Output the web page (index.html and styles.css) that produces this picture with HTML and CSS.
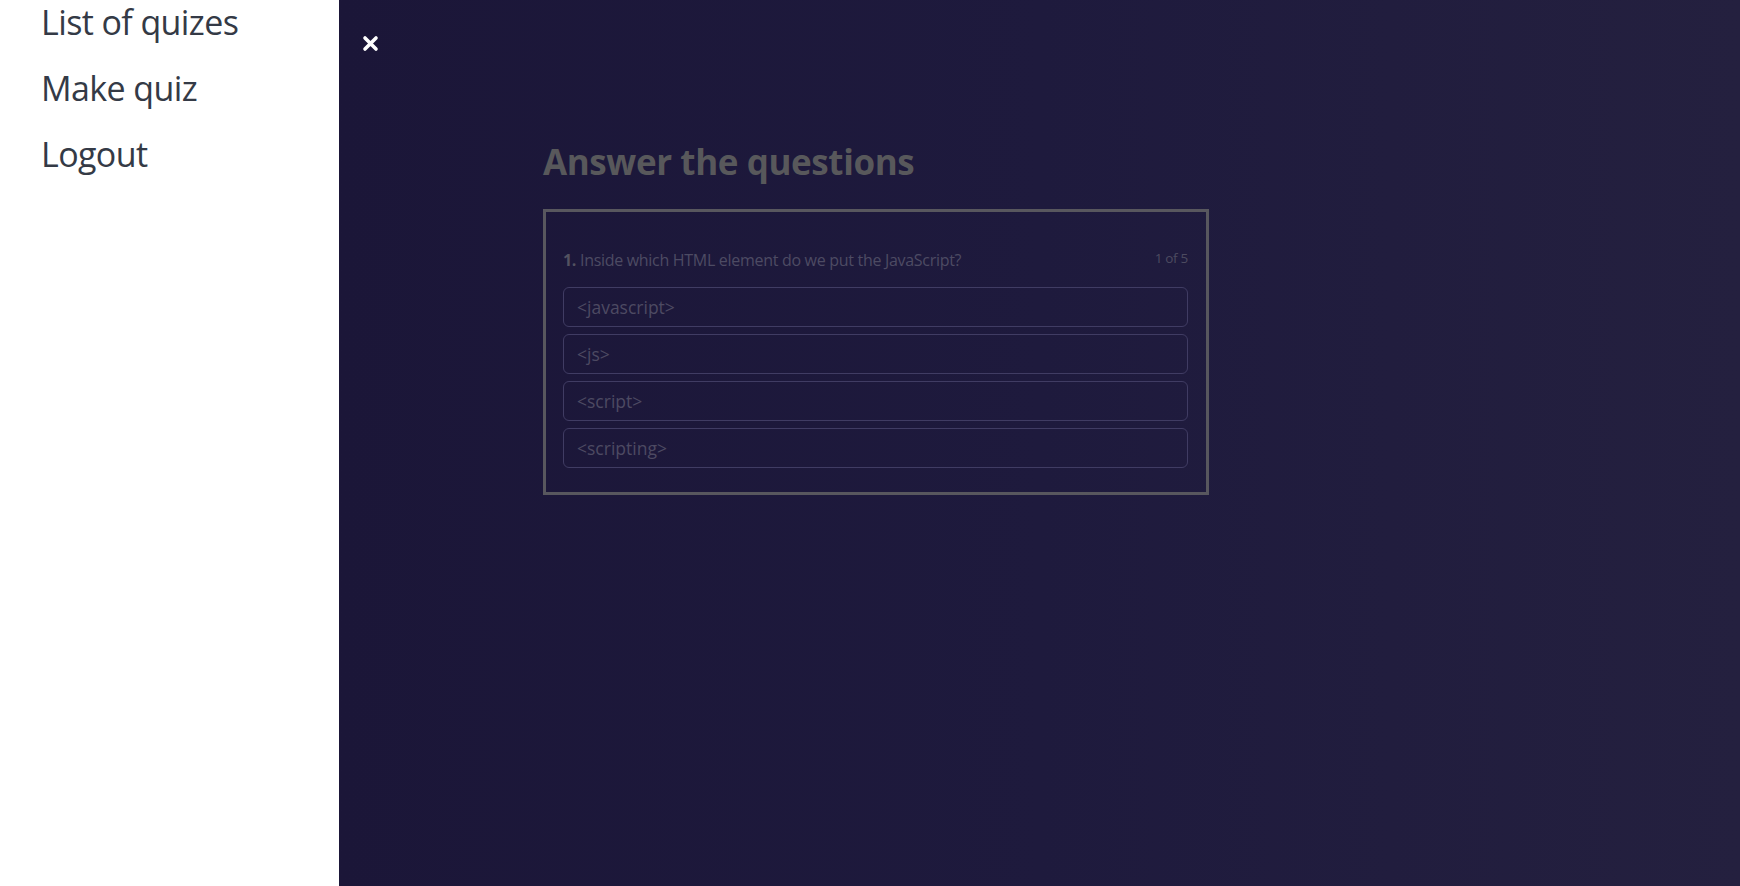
FILE: index.html
```html
<!DOCTYPE html>
<html lang="en">
<head>
<meta charset="utf-8">
<title>Quiz</title>
<link rel="stylesheet" href="styles.css">
</head>
<body>
<div class="app">
  <nav class="sidenav">
    <a href="#" class="nav-link">List of quizes</a>
    <a href="#" class="nav-link">Make quiz</a>
    <a href="#" class="nav-link">Logout</a>
  </nav>
  <main class="overlay">
    <button class="close-btn" aria-label="Close">
      <svg width="17" height="17" viewBox="0 0 17 17"><path d="M3 3 L14 14 M14 3 L3 14" stroke="#fff" stroke-width="3.6" stroke-linecap="round"/></svg>
    </button>
    <section class="quiz">
      <h1 class="quiz-title">Answer the questions</h1>
      <div class="card">
        <div class="question-row">
          <p class="question"><b>1.</b> Inside which HTML element do we put the JavaScript?</p>
          <span class="counter">1 of 5</span>
        </div>
        <div class="options">
          <div class="option">&lt;javascript&gt;</div>
          <div class="option">&lt;js&gt;</div>
          <div class="option">&lt;script&gt;</div>
          <div class="option">&lt;scripting&gt;</div>
        </div>
      </div>
    </section>
  </main>
</div>
</body>
</html>
```

FILE: styles.css
```css
html, body {
  margin: 0;
  padding: 0;
  height: 100%;
}
body {
  font-family: "Open Sans", "Noto Sans", Arial, sans-serif;
  overflow: hidden;
}
.app {
  display: flex;
  height: 886px;
}
.sidenav {
  width: 339px;
  flex: none;
  background: #fff;
  display: flex;
  flex-direction: column;
  padding: 0 0 0 41px;
  box-sizing: border-box;
  gap: 14px;
  margin-top: -4px;
}
.nav-link {
  font-size: 34px;
  line-height: 52px;
  color: #343a46;
  text-decoration: none;
  letter-spacing: -0.6px;
}
.overlay {
  flex: 1;
  background: linear-gradient(to right, #1b1638 0%, #1e1a3d 50%, #24203f 100%);
  padding: 35px 0 0 23px;
  box-sizing: border-box;
}
.close-btn {
  display: block;
  background: none;
  border: 0;
  padding: 0;
  width: 17px;
  height: 17px;
  cursor: pointer;
}
.close-btn svg { display: block; }
.quiz {
  margin: 86px 0 0 181px;
  width: 666px;
}
.quiz-title {
  margin: 0 0 23px;
  font-size: 35px;
  line-height: 48px;
  font-weight: 700;
  color: #58585b;
  letter-spacing: -0.4px;
}
.card {
  border: 3px solid #58575e;
  padding: 37px 18px 24px 17px;
}
.question-row {
  display: flex;
  justify-content: space-between;
  align-items: flex-start;
  margin-bottom: 16px;
}
.question {
  margin: 0;
  font-size: 16px;
  line-height: 22px;
  color: #4d4b63;
  letter-spacing: -0.3px;
}
.question b { color: #535260; }
.counter {
  font-size: 13.5px;
  line-height: 18px;
  color: #4d4b60;
  letter-spacing: -0.3px;
}
.options {
  display: flex;
  flex-direction: column;
  gap: 7px;
}
.option {
  height: 40px;
  box-sizing: border-box;
  border: 1px solid #403c63;
  border-radius: 6px;
  padding: 0 13px;
  display: flex;
  align-items: center;
  font-size: 17.5px;
  color: #4d4a62;
  letter-spacing: 0;
}
```
